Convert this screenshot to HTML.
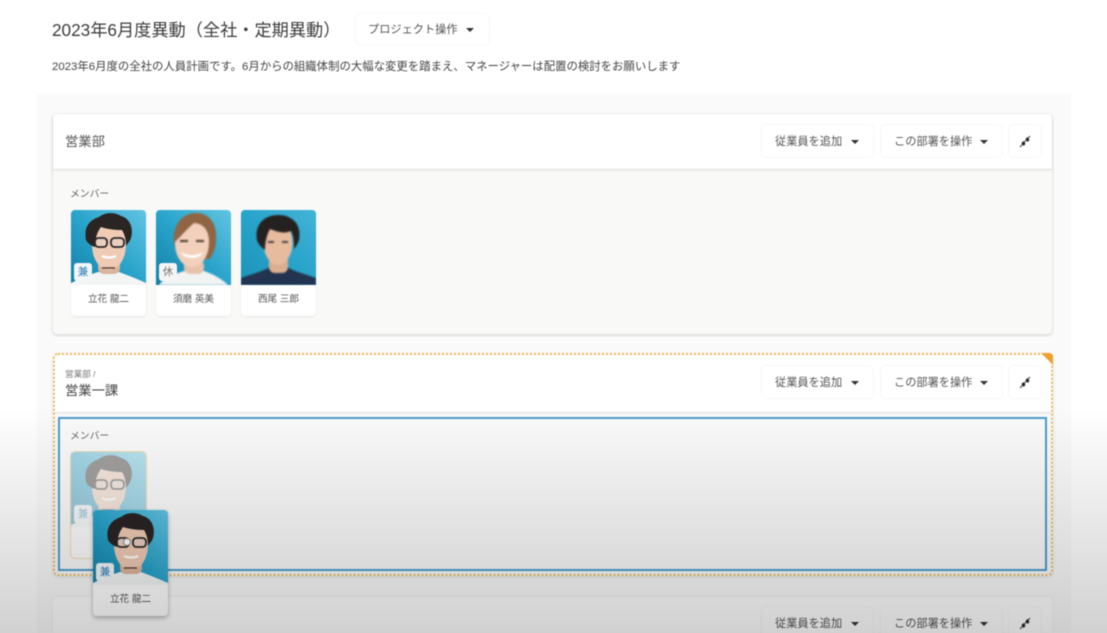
<!DOCTYPE html>
<html lang="ja"><head><meta charset="utf-8"><title>2023年6月度異動</title>
<style>
*{box-sizing:border-box}
html,body{margin:0;padding:0;width:1107px;height:633px;overflow:hidden;background:#fff}
body{font-family:"Liberation Sans","Noto Sans CJK JP",sans-serif;color:#444;position:relative}
#w{position:absolute;inset:0;filter:blur(.55px)}
.a{position:absolute;white-space:nowrap}
.panel{position:absolute;background:#fff}
.btn{position:absolute;height:32px;background:#fff;border-radius:4px;box-shadow:0 0 2px rgba(0,0,0,.09);font-size:11.2px;line-height:34px;color:#555;white-space:nowrap}
.btn span{position:absolute;left:13px;top:0}
.btn i{position:absolute;top:14px;width:0;height:0;border-left:4px solid transparent;border-right:4px solid transparent;border-top:4px solid #333}
.pin{position:absolute;width:32px;height:32px;background:#fff;border-radius:4px;box-shadow:0 0 2px rgba(0,0,0,.09)}
.card{position:absolute;width:75px;height:106px;background:#fff;border-radius:4px;overflow:hidden;box-shadow:0 1px 2px rgba(0,0,0,.08)}
.card svg{position:absolute;left:0;top:0;display:block}
.card svg .f{filter:blur(.9px)}
.card .n{position:absolute;left:0;right:0;top:74px;height:31px;line-height:31px;text-align:center;font-size:9.6px;color:#555}
.badge{position:absolute;left:3px;top:53px;width:18px;height:18px;background:#f2f6f8;border-radius:3px;font-size:10.5px;line-height:18px;text-align:center;color:#2a7ab8}
</style></head><body>
<svg width="0" height="0" style="position:absolute"><defs>
<linearGradient id="b1" x1="0" y1="1" x2="1" y2="0"><stop offset="0" stop-color="#127fa6"/><stop offset=".5" stop-color="#2aa4cb"/><stop offset="1" stop-color="#62c4e2"/></linearGradient>
<symbol id="man" viewBox="0 0 75 75"><g class="f">
<path d="M0 75v-2c8-4 18-8 27-11h21c8 3 18 7 27 11v2z" fill="#f3f5f5"/>
<rect x="27" y="48" width="22" height="16" rx="6" fill="#dcb49c"/>
<ellipse cx="38" cy="35" rx="17" ry="25" fill="#efcab4"/>
<path d="M15 30C12 14 22 9 28 7c6-5 16-5 22-1 8 2 13 11 10 22-1 3-3 5-5 8 0-6-1-11-4-16-8 0-15-1-21-3-4 5-6 12-6 20-3-1-7-3-9-7z" fill="#2a2423"/>
<rect x="24" y="28" width="12" height="9" rx="3.500" fill="#e8cfc0" stroke="#2e2a2a" stroke-width="1.800"/>
<rect x="40" y="28" width="13" height="9" rx="3.500" fill="#e8cfc0" stroke="#2e2a2a" stroke-width="1.800"/>
<path d="M31 46c4 2 10 2 14 0" stroke="#fff" stroke-width="2.200" fill="none"/>
<path d="M31 58h13" stroke="#5e4436" stroke-width="1.500"/></g>
</symbol>
</defs></svg>
<div id="w">
<div class="a" style="left:52px;top:18px;font-size:17.2px;line-height:24px;color:#3c3c3c">2023年6月度異動（全社・定期異動）</div>
<div class="btn" style="left:356px;top:14px;width:133px;height:30px;line-height:32px"><span style="left:12px;font-size:11.2px">プロジェクト操作</span><i style="left:110px;top:14px"></i></div>
<div class="a" style="left:52px;top:59px;font-size:11.4px;line-height:16px;color:#444">2023年6月度の全社の人員計画です。6月からの組織体制の大幅な変更を踏まえ、マネージャーは配置の検討をお願いします</div>

<div class="panel" style="left:37px;top:94px;width:1034px;height:539px;background:#fafafa"></div>

<!-- 営業部 -->
<div class="panel" style="left:53px;top:114px;width:999px;height:220px;background:#f9f9f8;border-radius:4px;box-shadow:0 1px 3px rgba(0,0,0,.18)"></div>
<div class="panel" style="left:53px;top:114px;width:999px;height:55px;border-radius:4px 4px 0 0;box-shadow:0 1px 2px rgba(0,0,0,.14)"></div>
<div class="a" style="left:65px;top:133px;font-size:13.3px;line-height:18px;color:#555">営業部</div>
<div class="btn" style="left:762px;top:125px;width:111px"><span>従業員を追加</span><i style="left:89px;top:15px"></i></div>
<div class="btn" style="left:881px;top:125px;width:121px"><span>この部署を操作</span><i style="left:99px;top:15px"></i></div>
<div class="pin" style="left:1009px;top:125px"><svg width="32" height="32" viewBox="0 0 32 32"><path d="M11 22L21 11" stroke="#555" stroke-width="1.2" fill="none"/><path d="M12.500 18l2-2 2 3-2 2zM16.500 14l2-2 2 3-2 2z" fill="#222"/></svg></div>
<div class="a" style="left:70px;top:188px;font-size:9.8px;line-height:13px;color:#666">メンバー</div>

<div class="card" style="left:71px;top:210px">
<svg width="75" height="75" viewBox="0 0 75 75"><rect width="75" height="75" fill="url(#b1)"/><use href="#man" width="75" height="75"/></svg>
<div class="badge">兼</div><div class="n">立花 龍二</div></div>

<div class="card" style="left:156px;top:210px">
<svg width="75" height="75" viewBox="0 0 75 75"><rect width="75" height="75" fill="url(#b1)"/><g class="f"><path d="M18 34C16 13 28 3 40 3c13 0 21 10 20 26 0 8-2 14-6 19-4 3-20 3-30 0z" fill="#8f6543"/><path d="M3 75c4-6 15-11 25-14h20c9 3 18 8 24 14z" fill="#f1f3f3"/><rect x="28" y="50" width="20" height="14" rx="6" fill="#e7c3ae"/><path d="M19 33c0-11 8-20 18-20 10 0 16 7 16 19 0 14-7 25-17 25-10 0-17-11-17-24z" fill="#f3d0bb"/><path d="M19 32c1-12 10-21 20-20-6 5-13 13-20 20z" fill="#8f6543"/><path d="M25 42c6 4 16 4 22 0-2 8-20 8-22 0z" fill="#fff"/><path d="M24 31h8M40 31h8" stroke="#4a362a" stroke-width="2"/></g></svg>
<div class="badge" style="color:#777;background:#f5f5f5">休</div><div class="n">須磨 英美</div></div>

<div class="card" style="left:241px;top:210px">
<svg width="75" height="75" viewBox="0 0 75 75"><rect width="75" height="75" fill="#26a3ca"/><rect width="75" height="75" fill="url(#b1)" opacity=".5"/><g class="f"><path d="M0 75v-7c8-3 20-6 27-10h21c7 4 19 7 27 10v7z" fill="#22344f"/><rect x="28" y="44" width="19" height="19" rx="6" fill="#dcae90"/><ellipse cx="37" cy="33" rx="14.500" ry="22" fill="#e6bb9e"/><path d="M16 30C13 13 25 5 37 5c14 0 24 9 21 25-1 3-2 5-5 9 0-7 0-12-3-18-7 3-13 1-21-2-3 5-5 13-5 21-4-3-7-6-8-10z" fill="#252120"/><path d="M27 32h6M41 32h6" stroke="#333" stroke-width="1.800"/></g></svg>
<div class="n">西尾 三郎</div></div>

<!-- 営業一課 -->
<div class="panel" style="left:53px;top:353px;width:1000px;height:223px;background:#fafafa;border-radius:5px;box-shadow:0 1px 3px rgba(0,0,0,.1)"></div>
<div class="panel" style="left:54px;top:354px;width:998px;height:58px;border-radius:5px 5px 0 0;box-shadow:0 1px 2px rgba(0,0,0,.12)"></div>
<div class="a" style="left:53px;top:353px;width:1000px;height:223px;border:2px dotted #edb95f;border-radius:5px"></div>
<svg class="a" style="left:1041px;top:353px" width="12" height="12"><path d="M0 0h8q4 0 4 4v8z" fill="#f0a030"/></svg>
<div class="a" style="left:65px;top:368px;font-size:8.6px;line-height:12px;color:#777">営業部 /</div>
<div class="a" style="left:65px;top:382px;font-size:13.3px;line-height:18px;color:#444">営業一課</div>
<div class="btn" style="left:762px;top:366px;width:111px"><span>従業員を追加</span><i style="left:89px;top:15px"></i></div>
<div class="btn" style="left:881px;top:366px;width:121px"><span>この部署を操作</span><i style="left:99px;top:15px"></i></div>
<div class="pin" style="left:1009px;top:366px"><svg width="32" height="32" viewBox="0 0 32 32"><path d="M11 22L21 11" stroke="#555" stroke-width="1.2" fill="none"/><path d="M12.500 18l2-2 2 3-2 2zM16.500 14l2-2 2 3-2 2z" fill="#222"/></svg></div>
<div class="a" style="left:58px;top:417px;width:989px;height:154px;border:2px solid #4a9ccb"></div>
<div class="a" style="left:70px;top:430px;font-size:9.8px;line-height:13px;color:#666">メンバー</div>

<div class="card" style="left:71px;top:452px;opacity:.42;box-shadow:0 0 0 1px #eeb24a"><svg width="75" height="75" viewBox="0 0 75 75"><rect width="75" height="75" fill="url(#b1)"/><use href="#man" width="75" height="75"/></svg><div class="badge">兼</div></div>

<!-- 3rd panel -->
<div class="panel" style="left:53px;top:597px;width:999px;height:36px;border-radius:4px 4px 0 0;box-shadow:0 0 2px rgba(0,0,0,.08)"></div>
<div class="btn" style="left:762px;top:607px;width:111px"><span>従業員を追加</span><i style="left:89px;top:15px"></i></div>
<div class="btn" style="left:881px;top:607px;width:121px"><span>この部署を操作</span><i style="left:99px;top:15px"></i></div>
<div class="pin" style="left:1009px;top:607px"><svg width="32" height="32" viewBox="0 0 32 32"><path d="M11 22L21 11" stroke="#555" stroke-width="1.2" fill="none"/><path d="M12.500 18l2-2 2 3-2 2zM16.500 14l2-2 2 3-2 2z" fill="#222"/></svg></div>

<!-- dragged -->
<div class="card" style="left:93px;top:510px;box-shadow:0 2px 5px rgba(0,0,0,.3)">
<svg width="75" height="75" viewBox="0 0 75 75"><rect width="75" height="75" fill="url(#b1)"/><use href="#man" width="75" height="75"/><circle cx="34" cy="32" r="3.500" fill="#fff" stroke="#888"/></svg>
<div class="badge">兼</div><div class="n">立花 龍二</div></div>
</div>
<div class="a" style="left:0;top:408px;width:1107px;height:225px;background:linear-gradient(to bottom,rgba(0,0,0,0),rgba(0,0,0,.18))"></div>
</body></html>
